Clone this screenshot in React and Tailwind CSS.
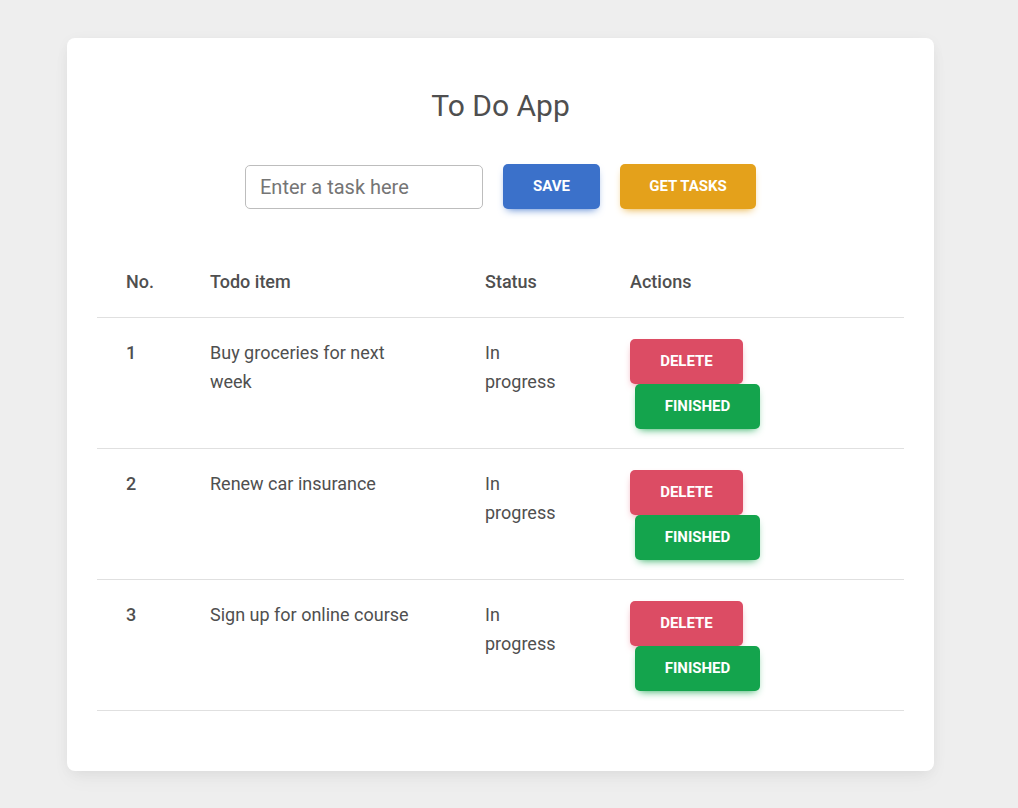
import React, { useState } from "react";

const initialTasks = [
  { id: 1, task: "Buy groceries for next week", status: "In progress" },
  { id: 2, task: "Renew car insurance", status: "In progress" },
  { id: 3, task: "Sign up for online course", status: "In progress" },
];

const App = () => {
  const [tasks] = useState(initialTasks);
  const [input, setInput] = useState("");

  return (
    <div
      className="min-h-screen bg-[#eeeeee] pt-[38px] pl-[67px] text-[#4f4f4f]"
      style={{ fontFamily: "Roboto, 'Liberation Sans', sans-serif" }}
    >
      <div className="w-[867px] h-[733px] bg-white rounded-[8px] shadow-[0_2px_15px_-3px_rgba(0,0,0,0.07),0_10px_20px_-2px_rgba(0,0,0,0.04)] px-[30px] pt-[48px]">
        <h1 className="text-center text-[30px] leading-[40px] font-normal text-[#4f4f4f]">To Do App</h1>

        <div className="flex justify-center items-center gap-[20px] mt-[38px]">
          <input
            type="text"
            value={input}
            onChange={(e) => setInput(e.target.value)}
            placeholder="Enter a task here"
            className="w-[238px] h-[44px] border border-[#bdbdbd] rounded-[5px] px-[14px] text-[20px] placeholder:text-[#757575] outline-none"
          />
          <button className="w-[97px] h-[45px] rounded-[5px] bg-[#3b71ca] text-white text-[15px] font-bold uppercase shadow-[0_4px_9px_-4px_#3b71ca]">
            Save
          </button>
          <button className="w-[136px] h-[45px] rounded-[5px] bg-[#e4a11b] text-white text-[15px] font-bold uppercase shadow-[0_4px_9px_-4px_#e4a11b]">
            Get tasks
          </button>
        </div>

        <table className="w-[807px] mt-[38px] text-[18px] leading-[29px] table-fixed border-collapse">
          <thead>
            <tr className="border-b border-[#e0e0e0]">
              <th className="w-[84px] text-left font-medium pl-[29px] pt-[20px] pb-[21px]">No.</th>
              <th className="w-[275px] text-left font-medium pl-[29px] pt-[20px] pb-[21px]">Todo item</th>
              <th className="w-[145px] text-left font-medium pl-[29px] pt-[20px] pb-[21px]">Status</th>
              <th className="text-left font-medium pl-[29px] pt-[20px] pb-[21px]">Actions</th>
            </tr>
          </thead>
          <tbody>
            {tasks.map((t) => (
              <tr key={t.id} className="border-b border-[#e0e0e0] align-top">
                <th className="text-left font-medium pl-[29px] pt-[20px] pb-[19px]">{t.id}</th>
                <td className="pl-[29px] pr-[29px] pt-[20px] pb-[19px]">{t.task}</td>
                <td className="pl-[29px] pr-[40px] pt-[20px] pb-[19px]">{t.status}</td>
                <td className="pl-[29px] pt-[21px] pb-[19px]">
                  <div className="flex flex-col items-start">
                    <button className="w-[113px] h-[45px] rounded-[5px] bg-[#dc4c64] text-white text-[15px] font-bold uppercase shadow-[0_4px_9px_-4px_#dc4c64]">
                      Delete
                    </button>
                    <button className="ml-[5px] w-[125px] h-[45px] rounded-[5px] bg-[#14a44d] text-white text-[15px] font-bold uppercase shadow-[0_4px_9px_-4px_#14a44d]">
                      Finished
                    </button>
                  </div>
                </td>
              </tr>
            ))}
          </tbody>
        </table>
      </div>
    </div>
  );
};

export default App;
